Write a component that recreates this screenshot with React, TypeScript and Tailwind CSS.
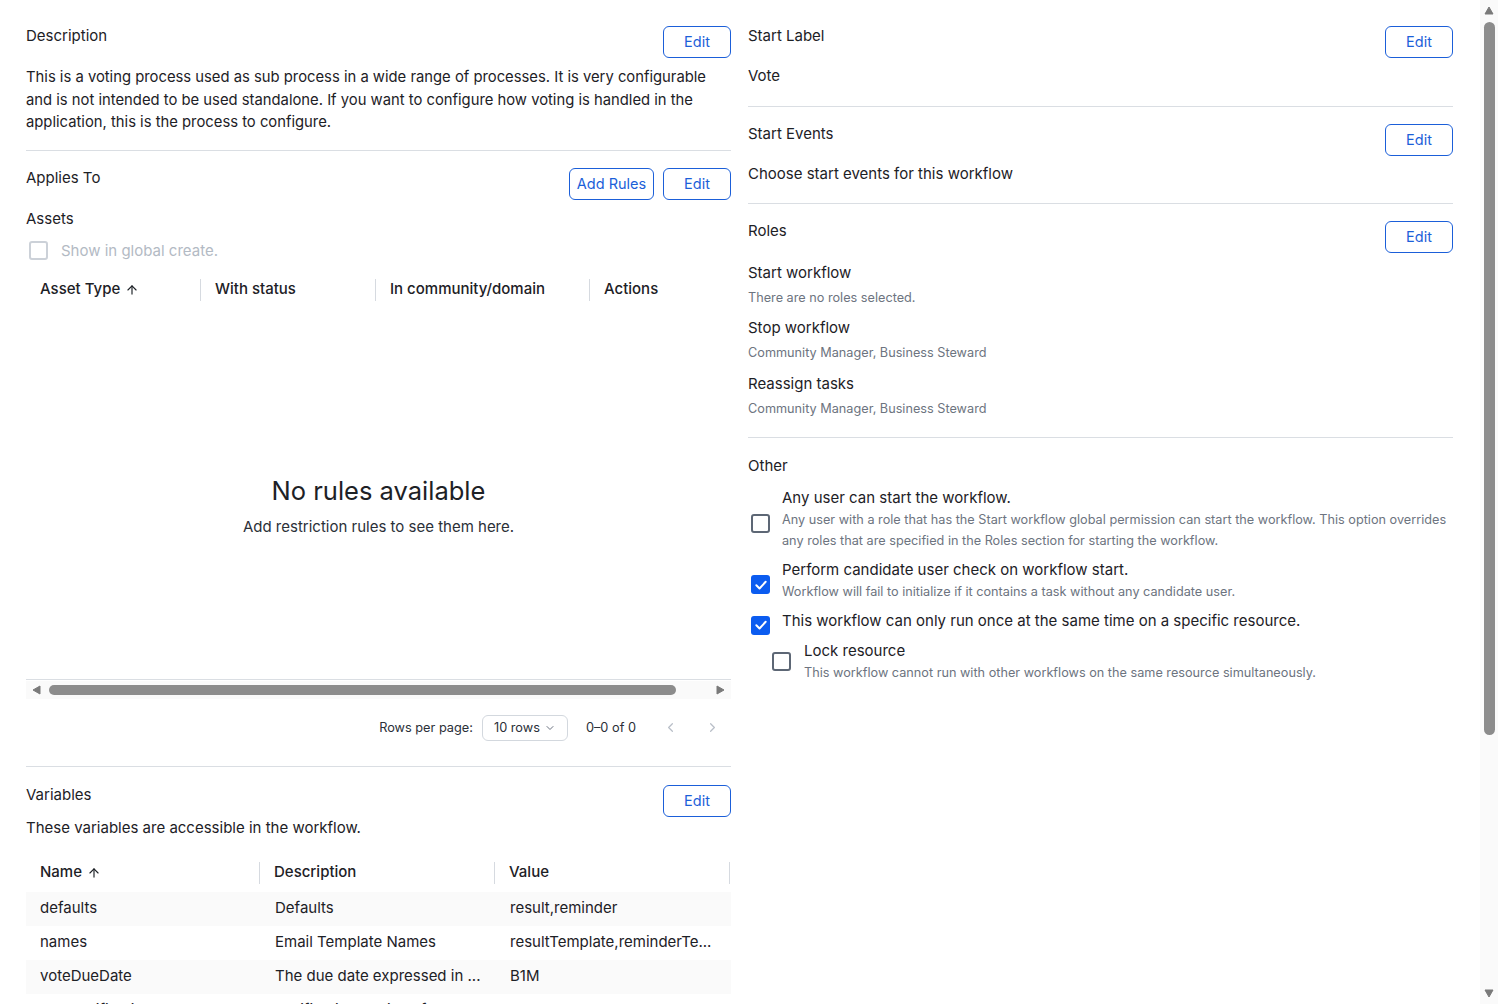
import { ArrowUp, ChevronDown, ChevronLeft, ChevronRight } from "lucide-react";

const variables = [
  { name: "defaults", description: "Defaults", value: "result,reminder" },
  { name: "names", description: "Email Template Names", value: "resultTemplate,reminderTe..." },
  { name: "voteDueDate", description: "The due date expressed in ...", value: "B1M" },
  { name: "voteNotifications", description: "Notification settings for ...", value: "true" },
  { name: "voteOutcome", description: "Outcome of the vote", value: "approved" },
  { name: "voteQuorum", description: "Minimum number of votes", value: "1" },
  { name: "voteReminder", description: "Reminder interval", value: "P1D" },
  { name: "voteResult", description: "Result template", value: "resultTemplate" },
  { name: "voters", description: "Users that can vote", value: "Business Steward" },
  { name: "voteWindow", description: "Voting window", value: "P7D" },
];

function EditButton({ label = "Edit", width = "w-[68px]" }: { label?: string; width?: string }) {
  return (
    <button
      className={`${width} h-8 shrink-0 rounded-md border border-[#1b5fd9] bg-white text-[14.5px] text-[#1b5fd9]`}
    >
      {label}
    </button>
  );
}

function Checkbox({ checked = false, disabled = false, className = "" }: { checked?: boolean; disabled?: boolean; className?: string }) {
  if (checked) {
    return (
      <span className={`flex h-[19px] w-[19px] shrink-0 items-center justify-center rounded-[3px] bg-[#0b5cf0] ${className}`}>
        <svg width="14" height="14" viewBox="0 0 24 24" fill="none" stroke="white" strokeWidth="3.4" strokeLinecap="round" strokeLinejoin="round">
          <polyline points="4 12.5 9.5 18 20 6.5" />
        </svg>
      </span>
    );
  }
  return (
    <span
      className={`block h-[19px] w-[19px] shrink-0 rounded-[3px] border-2 bg-white ${
        disabled ? "border-[#ccd1d8]" : "border-[#5d6775]"
      } ${className}`}
    />
  );
}

function SectionHeader({ title, children }: { title: string; children?: React.ReactNode }) {
  return (
    <div className="flex items-start justify-between">
      <h3 className="-mt-px text-[15px] leading-[22px] text-[#1d2126]">{title}</h3>
      <div className="flex gap-[9px]">{children}</div>
    </div>
  );
}

function Pagination({ label }: { label: string }) {
  return (
    <div className="flex items-center justify-end pr-[11px] text-[12.75px] text-[#2b3038]">
      <span>Rows per page:</span>
      <div className="ml-[9px] flex h-[26px] w-[86px] items-center justify-center gap-1 rounded-md border border-[#d3d8de]">
        <span>10 rows</span>
        <ChevronDown size={12} className="text-[#6b7280]" />
      </div>
      <span className="ml-[18px]">{label}</span>
      <ChevronLeft size={15} className="ml-[27px] text-[#b9bfc8]" />
      <ChevronRight size={15} className="ml-[27px] text-[#b9bfc8]" />
    </div>
  );
}

function HeaderCell({ label, sort, className = "" }: { label: string; sort?: boolean; className?: string }) {
  return (
    <div className={`flex items-center ${className}`}>
      <div className="flex flex-1 items-center gap-[5px] pl-[14px] text-[15px] font-medium text-[#1d2126]">
        {label}
        {sort && <ArrowUp size={14} strokeWidth={2} className="text-[#1d2126]" />}
      </div>
      <div className="h-[22px] w-px bg-[#d6dae0]" />
    </div>
  );
}

function Option({
  checked,
  label,
  description,
  indent = false,
}: {
  checked?: boolean;
  label: string;
  description?: string[];
  indent?: boolean;
}) {
  return (
    <div className={`flex items-center ${indent ? "gap-[13px] pl-[24px]" : "gap-[12px] pl-[3px]"}`}>
      <Checkbox checked={checked} className={indent ? "" : "translate-y-[4px]"} />
      <div>
        <div className="text-[15px] leading-[22px] text-[#1d2126]">{label}</div>
        {description && (
          <div className="whitespace-nowrap text-[12.7px] leading-[21px] text-[#6d7480]">
            {description.map((d) => (
              <div key={d}>{d}</div>
            ))}
          </div>
        )}
      </div>
    </div>
  );
}

function Triangle({ dir }: { dir: "up" | "down" | "left" | "right" }) {
  const points = {
    up: "5,1 9,8 1,8",
    down: "1,2 9,2 5,9",
    left: "8,1 8,9 1,5",
    right: "2,1 2,9 9,5",
  }[dir];
  return (
    <svg width="10" height="10" viewBox="0 0 10 10" className="shrink-0">
      <polygon points={points} fill="#7a7a7a" strokeLinejoin="round" stroke="#7a7a7a" strokeWidth="1" />
    </svg>
  );
}

function HorizontalScrollbar() {
  return (
    <div className="mt-[1px] flex h-[18px] items-center bg-[#fafafa] px-[6px]">
      <Triangle dir="left" />
      <div className="ml-[7px] h-[10px] w-[627px] rounded-full bg-[#8c8c8c]" />
      <div className="flex-1" />
      <Triangle dir="right" />
    </div>
  );
}

function VerticalScrollbar() {
  return (
    <div className="flex h-screen w-[18px] shrink-0 flex-col items-center bg-[#fafafa] py-[6px]">
      <Triangle dir="up" />
      <div className="mt-[6px] h-[713px] w-[11px] rounded-full bg-[#8c8c8c]" />
      <div className="flex-1" />
      <Triangle dir="down" />
    </div>
  );
}

export default function App() {
  return (
    <div className="flex h-screen overflow-hidden bg-white font-['Inter','Noto_Sans',sans-serif] text-[15px] text-[#1d2126]">
      <div className="min-w-0 flex-1 overflow-hidden">
        <div className="grid grid-cols-2 gap-x-[17px] pl-[26px] pr-[27px]">
          {/* Left column */}
          <div>
            {/* Description */}
            <section className="border-b border-[#dadee3] pt-[26px] pb-[16px]">
              <SectionHeader title="Description">
                <EditButton />
              </SectionHeader>
              <p className="mt-[8px] text-[14.8px] leading-[22.5px] text-[#1d2126]">
                This is a voting process used as sub process in a wide range of processes. It is very configurable
                and is not intended to be used standalone. If you want to configure how voting is handled in the
                application, this is the process to configure.
              </p>
            </section>

            {/* Applies To */}
            <section className="border-b border-[#dadee3] pt-[17px] pb-[25px]">
              <SectionHeader title="Applies To">
                <EditButton label="Add Rules" width="w-[85px]" />
                <EditButton />
              </SectionHeader>
              <div className="mt-[8px] text-[15px] leading-[22px]">Assets</div>
              <div className="mt-[10px] flex items-center gap-[13px] pl-[3px]">
                <Checkbox disabled />
                <span className="text-[15px] leading-[22px] text-[#b3bac4]">Show in global create.</span>
              </div>

              <div className="mt-[10px] overflow-hidden">
                <div className="flex h-[36px] w-[750px]">
                  <HeaderCell label="Asset Type" sort className="w-[175px]" />
                  <HeaderCell label="With status" className="w-[175px]" />
                  <HeaderCell label="In community/domain" className="w-[214px]" />
                  <HeaderCell label="Actions" className="w-[186px]" />
                </div>
                <div className="flex h-[372px] flex-col items-center border-b border-[#dadee3] pt-[166px]">
                  <div className="text-[25.5px] leading-[34px] text-[#1d2126]">No rules available</div>
                  <div className="mt-[8px] text-[15px] leading-[22px] text-[#2b3038]">
                    Add restriction rules to see them here.
                  </div>
                </div>
                <HorizontalScrollbar />
              </div>

              <div className="mt-[16px]">
                <Pagination label="0–0 of 0" />
              </div>
            </section>

            {/* Variables */}
            <section className="pt-[18px] pb-[40px]">
              <SectionHeader title="Variables">
                <EditButton />
              </SectionHeader>
              <p className="text-[15px] leading-[22px]">These variables are accessible in the workflow.</p>

              <div className="mt-[15px]">
                <div className="flex h-[38px]">
                  <HeaderCell label="Name" sort className="w-[234px]" />
                  <HeaderCell label="Description" className="w-[235px]" />
                  <HeaderCell label="Value" className="w-[235px]" />
                </div>
                {variables.map((v, i) => (
                  <div
                    key={v.name}
                    className={`flex h-[34px] items-center text-[15px] text-[#1d2126] ${
                      i % 2 === 0 ? "bg-[#fafafa]" : "bg-white"
                    }`}
                  >
                    <div className="w-[234px] truncate pl-[14px]">{v.name}</div>
                    <div className="w-[235px] truncate pl-[15px]">{v.description}</div>
                    <div className="w-[235px] truncate pl-[15px]">{v.value}</div>
                  </div>
                ))}
              </div>
              <div className="mt-[20px]">
                <Pagination label="1–10 of 12" />
              </div>
            </section>
          </div>

          {/* Right column */}
          <div>
            <section className="border-b border-[#dadee3] pt-[26px] pb-[19px]">
              <SectionHeader title="Start Label">
                <EditButton />
              </SectionHeader>
              <div className="mt-[7px] text-[15px] leading-[22px]">Vote</div>
            </section>

            <section className="border-b border-[#dadee3] pt-[17px] pb-[18px]">
              <SectionHeader title="Start Events">
                <EditButton />
              </SectionHeader>
              <div className="mt-[7px] text-[15px] leading-[22px]">Choose start events for this workflow</div>
            </section>

            <section className="border-b border-[#dadee3] pt-[17px] pb-[18px]">
              <SectionHeader title="Roles">
                <EditButton />
              </SectionHeader>
              <div className="mt-[9px] text-[15px] leading-[22px]">Start workflow</div>
              <div className="mt-[4px] text-[12.7px] leading-[20px] text-[#6d7480]">There are no roles selected.</div>
              <div className="mt-[9px] text-[15px] leading-[22px]">Stop workflow</div>
              <div className="mt-[4px] text-[12.7px] leading-[20px] text-[#6d7480]">
                Community Manager, Business Steward
              </div>
              <div className="mt-[10px] text-[15px] leading-[22px]">Reassign tasks</div>
              <div className="mt-[4px] text-[12.7px] leading-[20px] text-[#6d7480]">
                Community Manager, Business Steward
              </div>
            </section>

            <section className="pt-[17px]">
              <h3 className="text-[15px] leading-[22px]">Other</h3>
              <div className="mt-[10px] flex flex-col gap-[8px]">
                <Option
                  label="Any user can start the workflow."
                  description={[
                    "Any user with a role that has the Start workflow global permission can start the workflow. This option overrides",
                    "any roles that are specified in the Roles section for starting the workflow.",
                  ]}
                />
                <Option
                  checked
                  label="Perform candidate user check on workflow start."
                  description={["Workflow will fail to initialize if it contains a task without any candidate user."]}
                />
                <Option checked label="This workflow can only run once at the same time on a specific resource." />
                <Option
                  indent
                  label="Lock resource"
                  description={["This workflow cannot run with other workflows on the same resource simultaneously."]}
                />
              </div>
            </section>
          </div>
        </div>
      </div>
      <VerticalScrollbar />
    </div>
  );
}
